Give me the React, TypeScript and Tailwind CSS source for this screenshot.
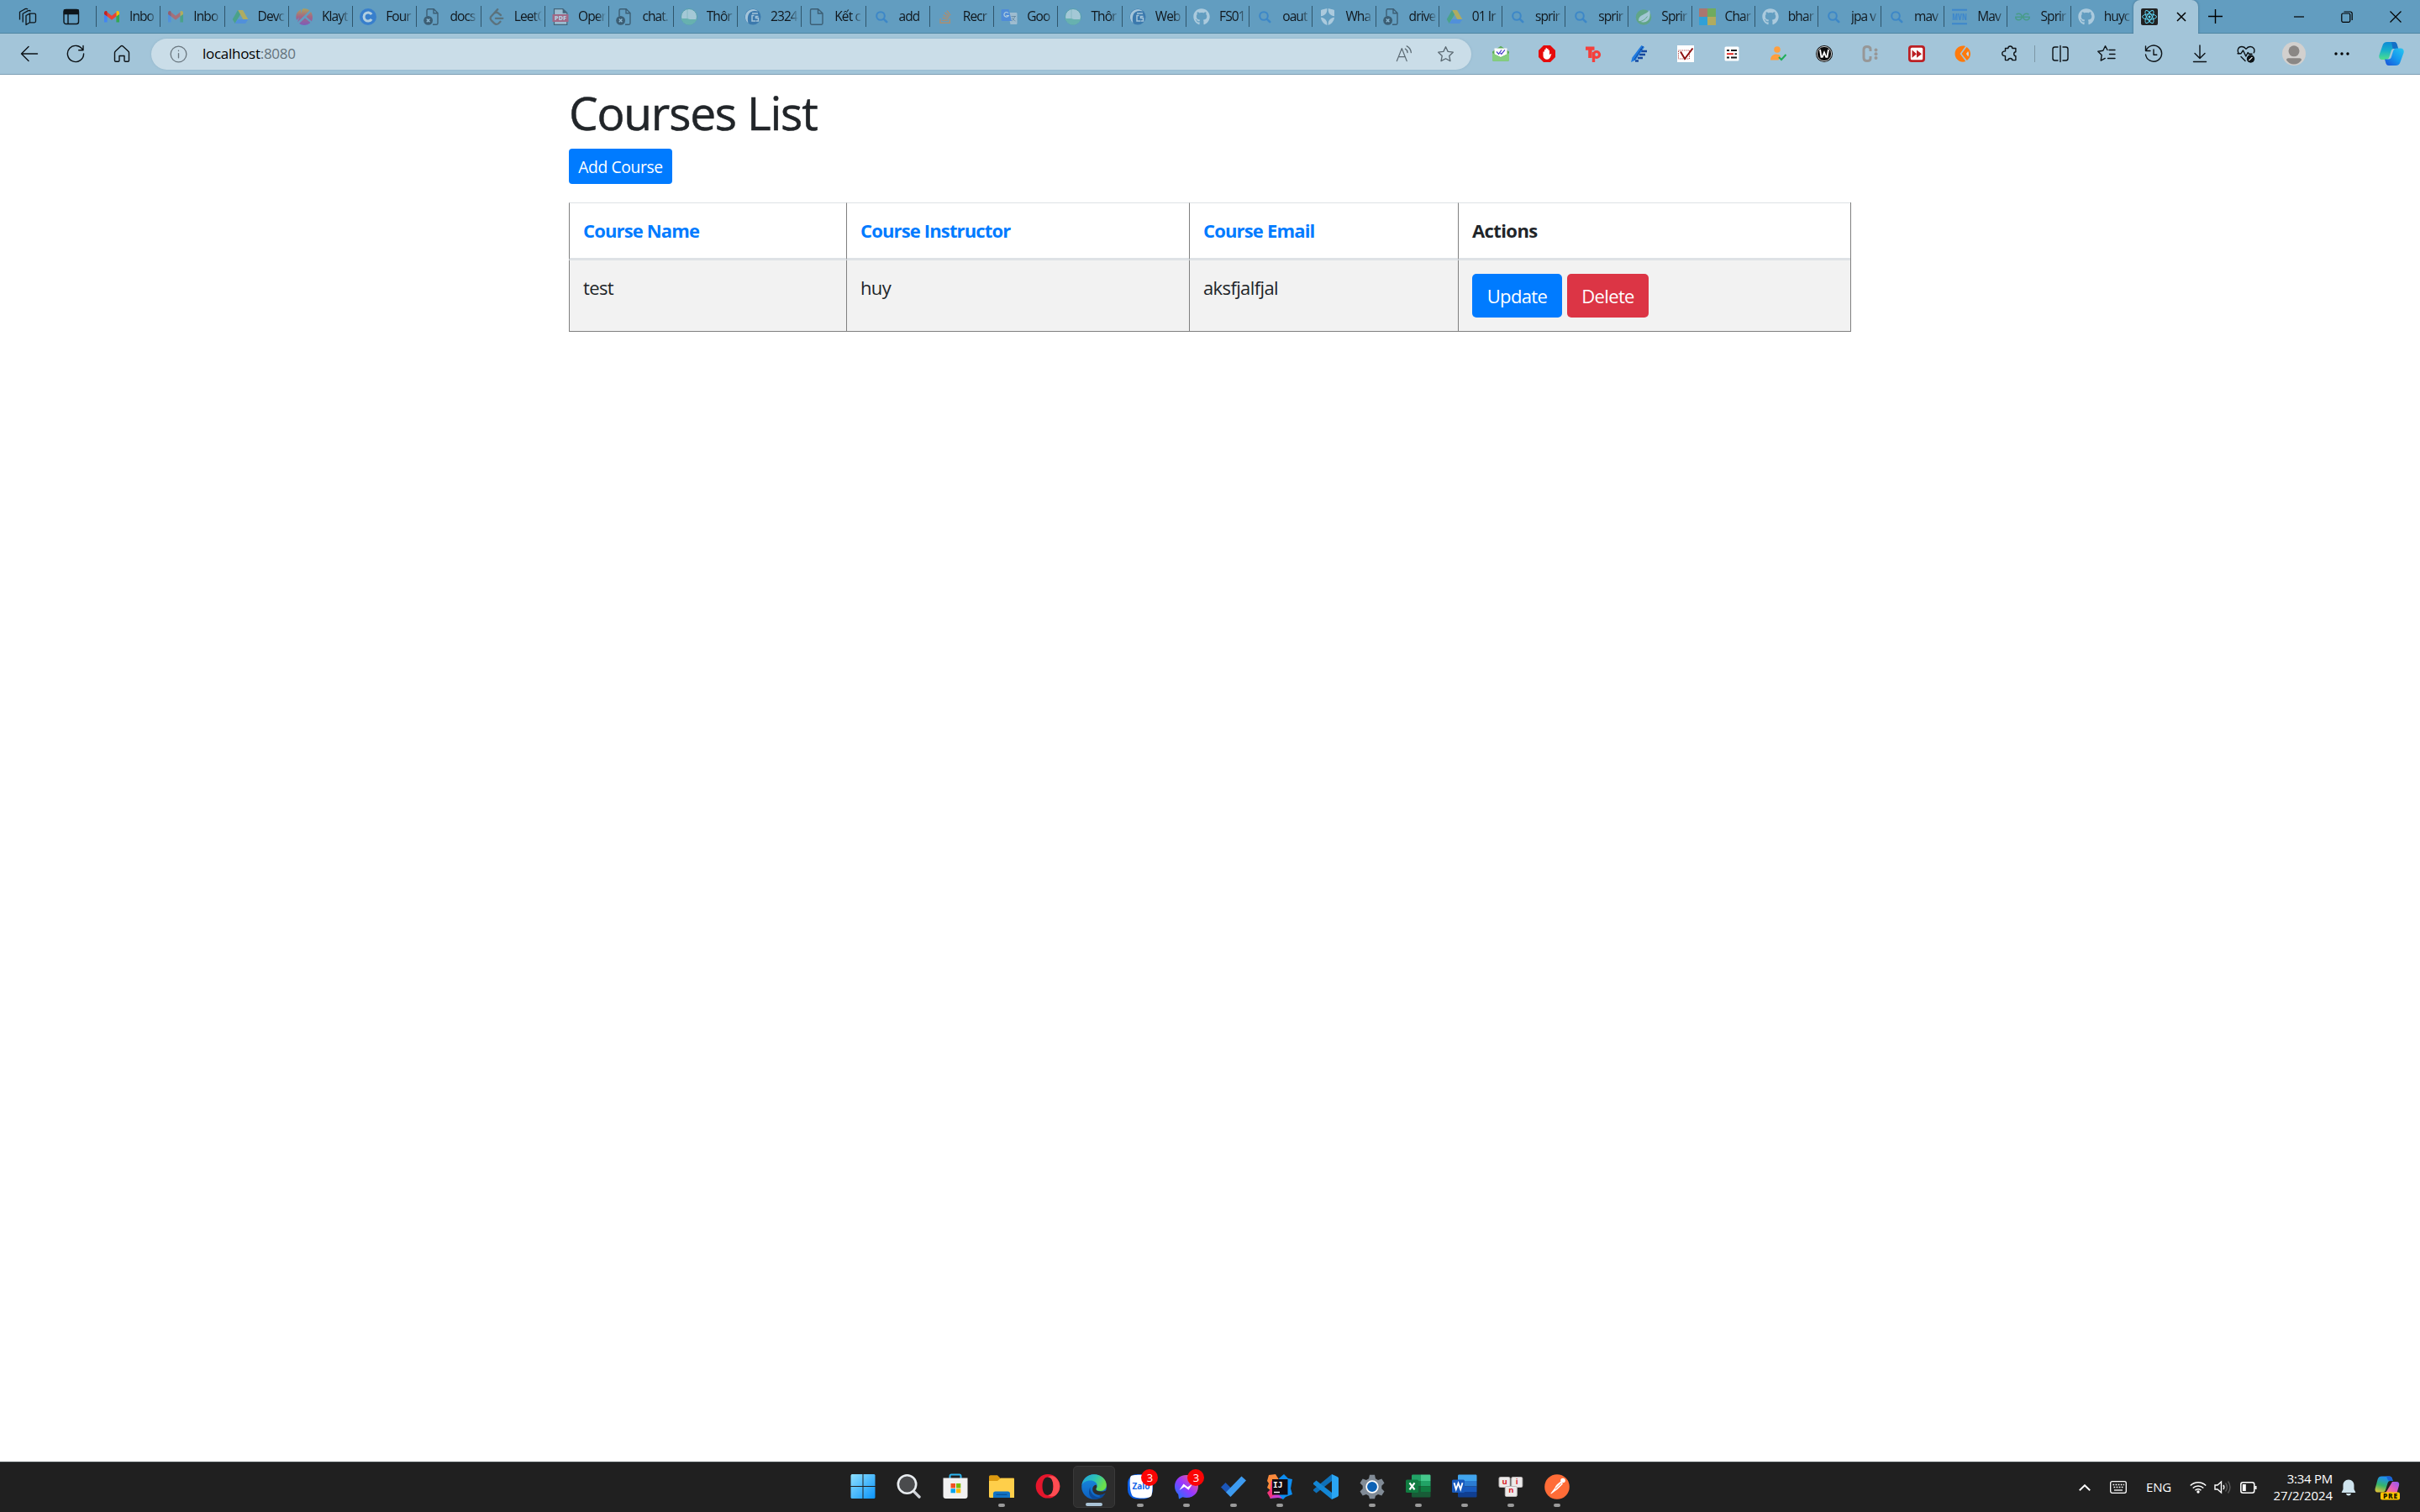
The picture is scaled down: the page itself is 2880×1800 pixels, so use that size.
import type { ReactNode } from "react";
import { FaGithub, FaStackOverflow } from "react-icons/fa";
import { SiGeeksforgeeks, SiLeetcode } from "react-icons/si";

/* ---------- tab favicons (20 x 20) ---------- */

const Gmail = () => (
  <svg viewBox="0 0 20 20" className="size-5">
    <path d="M1 5v11.5h3.6V8.6z" fill="#4285f4" />
    <path d="M15.400 8.600v7.900H19V5z" fill="#34a853" />
    <path d="M15.400 4.600v5l3.600-2.700V5.200c0-1.800-2-2.700-3.300-1.700z" fill="#fbbc04" />
    <path d="M4.600 9.600v-5L10 8.700l5.400-4.100v5L10 13.700z" fill="#ea4335" />
    <path d="M1 5.200v1.700l3.600 2.700v-5l-.3-1.100C3 2.500 1 3.400 1 5.200z" fill="#c5221f" />
  </svg>
);

const Drive = () => (
  <svg viewBox="0 0 20 20" className="size-5">
    <path d="M7 2h6l6.300 11h-6z" fill="#fbbc04" />
    <path d="M7 2 .7 13l3 5L10 7.300z" fill="#34a853" />
    <path d="M3.700 18h12.600l3-5H6.700z" fill="#4285f4" />
  </svg>
);

const Klay = () => (
  <svg viewBox="0 0 20 20" className="size-5">
    <defs>
      <linearGradient id="klay" x1="0" y1="0" x2="0" y2="1">
        <stop offset="0" stopColor="#f2a900" />
        <stop offset=".5" stopColor="#e5304c" />
        <stop offset="1" stopColor="#9b1fb0" />
      </linearGradient>
    </defs>
    <path d="M2 4.500 6 1v8L1 14C-.2 10 .3 7 2 4.500zM8 .5c3-.8 6-.1 8.500 2L2 16.500zM18 4l-5.500 6 6.500 5.500c1.500-4 1.200-8-1-11.500zM11 11.500 4 18c4 2.800 9.500 2.500 13.500-1z" fill="url(#klay)" />
  </svg>
);

const Coin = () => (
  <svg viewBox="0 0 20 20" className="size-5">
    <circle cx="10" cy="10" r="10" fill="#0f63d9" />
    <path d="M14.200 7.200a5 5 0 1 0 0 5.600" fill="none" stroke="#fff" strokeWidth="3" />
  </svg>
);

const PageX = () => (
  <svg viewBox="0 0 20 20" className="size-5" fill="none" stroke="#17212a" strokeWidth="1.400">
    <path d="M4 9.500V2.500C4 1.500 4.600.8 5.500.8h6.700L17 5.600v12c0 1-.6 1.600-1.500 1.600H11M12 1v4.800h5" />
    <circle cx="5.600" cy="14.400" r="5.400" fill="#17212a" stroke="none" />
    <path d="m3.800 12.600 3.600 3.600m0-3.600-3.600 3.600" stroke="#b5d4e6" />
  </svg>
);

const Page = () => (
  <svg viewBox="0 0 20 20" className="size-5" fill="none" stroke="#17212a" strokeWidth="1.400">
    <path d="M2.500 2.500C2.500 1.500 3 .8 4 .8h7.500l5.500 5v11.700c0 1-.6 1.700-1.500 1.700H4c-1 0-1.500-.7-1.500-1.700zM11.500 1v5H17" />
  </svg>
);

const Pdf = () => (
  <svg viewBox="0 0 20 20" className="size-5">
    <path d="M2.500.7h10.300l5 4.600v14H2.500z" fill="#d4dde3" stroke="#222d36" strokeWidth="1.200" />
    <path d="M12.600.7v5h5" fill="#222d36" />
    <rect x=".5" y="7" width="19" height="9" fill="#e0354c" />
    <text x="10" y="14.300" textAnchor="middle" fontFamily="Open Sans, sans-serif" fontSize="7.500" fontWeight="800" fill="#fff">PDF</text>
  </svg>
);

const Campus = () => (
  <svg viewBox="0 0 20 20" className="size-5">
    <circle cx="10" cy="10" r="9.500" fill="#e6f4ec" stroke="#46a094" />
    <path d="M1 12h7l3 1h8c-1.500 4.200-5 6.500-9 6.500S2 16.700 1 12z" fill="#6cc5a0" />
    <path d="M8 1v12" stroke="#85c2b4" strokeWidth=".6" />
  </svg>
);

const Globe = () => (
  <svg viewBox="0 0 20 20" className="size-5">
    <circle cx="10" cy="10" r="9.500" fill="#15569c" />
    <path d="M4.500 17.500C-1 13 0 5 6 2c4-2 8-1 10 1.500C11 2 6 3.500 4.500 8c-1 3-.8 6.500 0 9.500z" fill="#e6eef5" />
    <path d="M9 6h7M11.500 8.500H9V15h4m3.500-5.500h-3v2h3V15h-3" stroke="#e6eef5" strokeWidth="1.500" fill="none" />
  </svg>
);

const Lens = () => (
  <svg viewBox="0 0 20 20" className="size-5" fill="none" stroke="#1a73cf" strokeWidth="2.100">
    <circle cx="9" cy="9" r="4.800" />
    <path d="m12.600 12.600 3.600 3.400" strokeWidth="2.600" strokeLinecap="round" />
  </svg>
);

const Translate = () => (
  <svg viewBox="0 0 20 20" className="size-5">
    <path d="M8.500 5H18c1 0 1.500.6 1.500 1.500v11c0 1-.6 1.500-1.500 1.500h-6.500z" fill="#dadce0" />
    <path d="M2 1h7.500L13 15H2C1 15 .5 14.400.5 13.500v-11C.5 1.500 1 1 2 1z" fill="#3f7df0" />
    <path d="M9 5.600a2.800 2.800 0 1 0 .3 2.900H6.500" fill="none" stroke="#fff" strokeWidth="1.200" />
    <path d="M12.500 9.500H18m-1.300 0c-.6 2.500-2 4.200-3.500 5.500m.3-4c1 2 2.500 3.500 4 4" stroke="#6b7680" fill="none" strokeWidth=".9" />
  </svg>
);

const Microsoft = () => (
  <div className="grid size-5 grid-cols-2">
    <i className="bg-[#f25022]" />
    <i className="bg-[#7fba00]" />
    <i className="bg-[#00a4ef]" />
    <i className="bg-[#ffb900]" />
  </div>
);

const SpringLeaf = () => (
  <svg viewBox="0 0 20 20" className="size-5">
    <circle cx="10" cy="10.500" r="9.300" fill="#5fae50" />
    <path d="M17 2c1.500 6 1 14-7 14.500-2.500.2-4.500-.8-6-2C4 7 13 8 17 2z" fill="#e3f1e8" />
    <path d="M4 16c4-.5 8-2.500 10.500-6.500" stroke="#5fae50" fill="none" />
  </svg>
);

const Shield = () => (
  <svg viewBox="0 0 20 20" className="size-5" fill="#f4f8fa">
    <path d="M9.300 0v2.200C9 6 6.300 8.700 2 9.200V2.800c0-.8.400-1.300 1.200-1.400C5.500 1.100 7.500.6 9.300 0zM10.700 0v2.200c.3 3.800 3 6.500 7.300 7V2.800c0-.8-.4-1.300-1.200-1.400-2.300-.3-4.300-.8-6.100-1.400zM2 10.700c4.300.5 7 3 7.300 7V20C5 18.200 2.300 15 2 10.700zM18 10.700c-4.300.5-7 3-7.300 7V20c4.300-1.800 7-5 7.300-9.300z" />
  </svg>
);

const Mvn = () => (
  <svg viewBox="0 0 20 20" className="size-5">
    <path d="M1 1.800h18M1 18.200h18" stroke="#1a73d9" strokeWidth="2" />
    <text x="10" y="14" textAnchor="middle" textLength="17.500" lengthAdjust="spacingAndGlyphs" fontFamily="Open Sans, sans-serif" fontSize="11" fontWeight="800" fill="#1a73d9">MVN</text>
  </svg>
);

const ReactMark = () => (
  <svg viewBox="0 0 20 20" className="size-5">
    <rect width="20" height="20" rx="2" fill="#222" />
    <g fill="none" stroke="#61dafb" strokeWidth=".95">
      <ellipse cx="10" cy="10" rx="8.500" ry="3.200" />
      <ellipse cx="10" cy="10" rx="8.500" ry="3.200" transform="rotate(60 10 10)" />
      <ellipse cx="10" cy="10" rx="8.500" ry="3.200" transform="rotate(120 10 10)" />
    </g>
    <circle cx="10" cy="10" r="1.500" fill="#61dafb" />
  </svg>
);

const Leet = () => <SiLeetcode className="size-5 text-[#55483a]" />;
const Geeks = () => <SiGeeksforgeeks className="size-[18px] text-[#2f9b56]" />;
const GitHub = () => <FaGithub className="size-5 text-[#f4f8fa]" />;
const Stack = () => <FaStackOverflow className="size-[18px] text-[#f48024]" />;

const leftTabs: [() => ReactNode, string][] = [
  [Gmail, "Inbo"], [Gmail, "Inbo"], [Drive, "Devc"], [Klay, "Klayt"], [Coin, "Four"],
  [PageX, "docs"], [Leet, "LeetC"], [Pdf, "Oper"], [PageX, "chat."],
  [Campus, "Thôr"], [Globe, "2324"], [Page, "Kết c"], [Lens, "add"], [Stack, "Recr"],
  [Translate, "Goo"], [Campus, "Thôr"], [Globe, "Web"],
];

const rightTabs: [() => ReactNode, string][] = [
  [GitHub, "FS01"], [Lens, "oaut"], [Shield, "Wha"], [PageX, "drive"], [Drive, "01 Ir"],
  [Lens, "sprir"], [Lens, "sprir"], [SpringLeaf, "Sprir"], [Microsoft, "Char"], [GitHub, "bhar"],
  [Lens, "jpa v"], [Lens, "mav"], [Mvn, "Mav"], [Geeks, "Sprir"], [GitHub, "huyc"],
];

const Tab = ({ icon, label, width, strong }: { icon: ReactNode; label: string; width: string; strong?: boolean }) => (
  <div className={`flex h-[25px] shrink-0 items-center border-l border-[#2f556b] pl-2 ${width}`}>
    <span className={`flex size-5 shrink-0 items-center justify-center ${strong ? "" : "opacity-50"}`}>{icon}</span>
    <span className="ml-[11px] w-[33px] overflow-hidden text-[15.500px] leading-[25px] tracking-[-0.900px] whitespace-nowrap text-[#10171c] [mask-image:linear-gradient(to_right,black_68%,transparent)]">
      {label}
    </span>
  </div>
);

/* ---------- browser toolbar ---------- */

const Line = ({ children, className = "size-[22px]" }: { children: ReactNode; className?: string }) => (
  <svg viewBox="0 0 22 22" className={className} fill="none" stroke="currentColor" strokeWidth="1.400" strokeLinecap="round" strokeLinejoin="round">
    {children}
  </svg>
);

const Slot = ({ children, className = "w-[55px]" }: { children: ReactNode; className?: string }) => (
  <div className={`flex shrink-0 items-center justify-center ${className}`}>{children}</div>
);

const Star = () => <path d="m11 1.800 2.800 5.900 6.400.9-4.700 4.500 1.200 6.500-5.700-3.100-5.700 3.100 1.200-6.500L1.800 8.600l6.400-.9z" />;

const extensions: ReactNode[] = [
  <svg viewBox="0 0 20 20" className="size-5">
    <path d="M0 7.500 10 .8l10 6.700V17c0 1-.7 1.800-1.800 1.800H1.800C.7 18.800 0 18 0 17z" fill="#5cab57" />
    <path d="M2.500 3.500h15v7L10 14l-7.500-3.500z" fill="#fff" />
    <path d="m0 9 10 5.500L20 9v8c0 1-.7 1.800-1.800 1.800H1.800C.7 18.800 0 18 0 17z" fill="#86cf80" />
    <path d="m5 7.500 2.500 2.800L11 5.500M9.500 9l1.300 1.300 4.200-5" stroke="#4338ca" fill="none" strokeWidth="1.200" />
  </svg>,
  <svg viewBox="0 0 20 20" className="size-5">
    <path d="M6 0h8l6 6v8l-6 6H6l-6-6V6z" fill="#e60b0b" />
    <path d="M5.500 7.500v5c0 2.500 2 4.300 4.500 4.300 2.300 0 3.500-1.500 4.200-3.300l1.200-3.500-1.800.5-.6.900V5.800h-1.500V4h-1.500v-.8H8.500V5H7v2.500z" fill="#fff" />
  </svg>,
  <svg viewBox="0 0 20 20" className="size-5 overflow-visible">
    <path d="M1 1.500h10.500v4.300H8.600V15H4.200V5.800H1z" fill="#f4403c" />
    <path d="M10.500 20V8" stroke="#f4403c" strokeWidth="3.400" />
    <circle cx="14" cy="11" r="3.500" fill="none" stroke="#f4403c" strokeWidth="3.200" />
  </svg>,
  <svg viewBox="0 0 20 20" className="size-5">
    <path d="M12 7h7M10 11h7M8 15h6M5 18.500h4" stroke="#15489f" strokeWidth="2.500" />
    <path d="M12.500 0 16 2 5.500 17.500 0 20l1.500-5.500z" fill="#1f7ae0" />
    <path d="m11 4.500 2.500 1.500M14.500 1 4 17" stroke="#124a9c" />
  </svg>,
  <svg viewBox="0 0 20 20" className="size-5">
    <rect width="20" height="20" fill="#fff" />
    <rect x="1.500" y="6" width="13" height="10" fill="none" stroke="#b34747" strokeDasharray="1.200 1" />
    <path d="m4 7.500 5 8.500L18.500 3.500" fill="none" stroke="#8e1010" strokeWidth="2" />
  </svg>,
  <svg viewBox="0 0 20 20" className="size-5">
    <rect x="1.500" y="1.500" width="17" height="17" rx="1.500" fill="#fff" />
    <path d="M4 6h3m2 0h7M4 14.500h3m2 0h7" stroke="#1d1d1d" strokeWidth="1.800" />
    <path d="M4 10.200h8" stroke="#e5261f" strokeWidth="2" />
    <path d="M13.500 10.200H16" stroke="#1d1d1d" strokeWidth="1.800" />
  </svg>,
  <svg viewBox="0 0 20 20" className="size-5">
    <circle cx="9" cy="5" r="3.800" fill="#ff9f3f" />
    <path d="M1 17.500c0-4.500 3-7 7-7 2 0 3.800.7 5 2l-2.500 5z" fill="#ff9f3f" />
    <path d="m11 14 3 3 5.500-6" fill="none" stroke="#1fae57" strokeWidth="2" />
  </svg>,
  <svg viewBox="0 0 20 20" className="size-5">
    <circle cx="10" cy="10" r="10" fill="#0a0a0a" />
    <circle cx="10" cy="10" r="8.600" fill="none" stroke="#fff" strokeWidth=".8" />
    <path d="m5 5 1.500 8.800h1.300L10 8.500l2.200 5.300h1.300L15 5" fill="none" stroke="#fff" strokeWidth="1.900" />
  </svg>,
  <svg viewBox="0 0 20 20" className="size-5">
    <path d="M10 7V4.500C10 2.500 8.500 1.500 6 1.500s-4 1-4 3.500v10c0 2.500 1.500 3.500 4 3.500s4-1 4-3V13" fill="none" stroke="#979797" strokeWidth="3" />
    <g fill="#979797"><circle cx="16.500" cy="5.500" r="2" /><circle cx="16.500" cy="10.300" r="2" /><circle cx="16.500" cy="15.100" r="2" /></g>
  </svg>,
  <svg viewBox="0 0 20 20" className="size-5">
    <rect width="20" height="20" rx="4" fill="#bb2024" />
    <rect x="2.800" y="2.800" width="14.400" height="14.400" rx="1.500" fill="#fff" />
    <path d="m4.500 5.500 5.500 4.700-5.500 4.500zm5.500 0 6 4.700-6 4.500z" fill="#bb2024" />
  </svg>,
  <svg viewBox="0 0 20 20" className="size-5">
    <path d="M13 1 6.500 10l6.800 9C7 21.500.5 16.500.5 10S7-1 13 1z" fill="#ff7a0c" />
    <path d="m14.500 2-6 8 6.300 8C20 14.500 21 6.500 14.500 2z" fill="#ff7a0c" />
    <path d="m16.200 7-2.300 3 2.300 3.500c1-2 1-4.500 0-6.500z" fill="#c4dae6" />
  </svg>,
  <Line>
    <path d="M5.500 4.500h3.300c.2-3.300 4.900-3.300 5.100 0h4v4.200c-2.900.2-2.900 4.700 0 4.900v5h-4c-.2-2.900-4.900-2.900-5.100 0H5.500v-4.800c-5-.2-5-5.700 0-5.900z" transform="translate(1 0)" />
  </Line>,
];

const CopilotMark = () => (
  <svg viewBox="0 0 30 28" className="h-[28px] w-[30px]">
    <defs>
      <linearGradient id="cpa" x1="0" y1="0" x2="0" y2="1">
        <stop offset="0" stopColor="#0e8ad6" /><stop offset=".5" stopColor="#19b2c9" /><stop offset="1" stopColor="#4fe08a" />
      </linearGradient>
      <linearGradient id="cpb" x1="0" y1="1" x2="1" y2="0">
        <stop offset="0" stopColor="#1b4fd6" /><stop offset=".5" stopColor="#1597ee" /><stop offset="1" stopColor="#27c7f0" />
      </linearGradient>
    </defs>
    <path d="M10 0h8c2.500 0 3.300 1.500 4 4l1 4h-5c-2 0-3 1-3.500 3l-2 6.500c-.7 2.300-1.700 3.500-4 3.500H4c-3 0-4.300-2.300-3.500-5.500L4.500 4C5.300 1.200 7 0 10 0z" fill="url(#cpa)" />
    <path d="M15 0h3c2.500 0 3.300 1.500 4 4l1 4h-5c-2 0-1.500-1-2-3z" fill="#146fc6" />
    <path d="M20 28h-8c-2.500 0-3.300-1.500-4-4l-1-3.500h4.500c2 0 3-1 3.500-3l2-6.500c.7-2.300 1.700-3.500 4-3.500h5c3 0 4.300 2.300 3.500 5.500L25.500 24c-.8 2.800-2.500 4-5.500 4z" fill="url(#cpb)" />
  </svg>
);

const TitleBar = () => (
  <div className="flex h-10 items-center border-b border-[#4f85a3] bg-[#629dc0]">
    <div className="flex w-[114px] shrink-0 items-center pl-[22px]">
      <svg viewBox="0 0 22 22" className="size-[22px]" fill="none" stroke="#0d151a" strokeWidth="1.300" strokeLinejoin="round">
        <path d="m9 9.500 4.500-2.300v10.600L9 20.500zM13.500 7.200H19c.9 0 1.500.5 1.500 1.400v7.700c0 1-.6 1.500-1.500 1.500h-5.500" />
        <path d="M5.200 17.500V7.300l6-3.400c1.300-.6 2.500-.5 3.300.5M1.500 14.500V5.300l6.200-3.600c1.300-.6 2.500-.5 3.300.5" />
      </svg>
      <svg viewBox="0 0 20 20" className="ml-[31px] size-[20px]" fill="none" stroke="#0d151a" strokeWidth="1.400">
        <rect x="1" y="1.500" width="17.500" height="17" rx="2.500" />
        <path d="M1.500 2h16.500v4.500H1.500z" fill="#0d151a" />
        <path d="M6 6.500V18" />
      </svg>
    </div>
    {leftTabs.map(([Icon, label], i) => (
      <Tab key={i} icon={<Icon />} label={label} width="w-[76.300px]" strong={i === 0} />
    ))}
    {rightTabs.map(([Icon, label], i) => (
      <Tab key={i} icon={<Icon />} label={label} width="w-[75.200px]" />
    ))}
    <div className="relative -mb-px flex h-10 w-[77px] shrink-0 items-center rounded-t-lg bg-[#a3c5d9] pl-[9px] shadow-[0_0_3px_#3d6b86] [clip-path:inset(0_-4px_0_-4px)]">
      <ReactMark />
      <svg viewBox="0 0 12 12" className="ml-[22px] size-3" stroke="#000" strokeWidth="1.500"><path d="m1 1 10 10M11 1 1 11" /></svg>
    </div>
    <svg viewBox="0 0 17 17" className="ml-[12px] size-[17px]" stroke="#000" strokeWidth="1.400"><path d="M8.500 0v17M0 8.500h17" /></svg>
    <div className="ml-auto flex items-center">
      <Slot className="w-[57px]"><svg viewBox="0 0 12 12" className="size-3" stroke="#000" strokeWidth="1.200"><path d="M0 6h12" /></svg></Slot>
      <Slot className="w-[58px]">
        <svg viewBox="0 0 14 14" className="size-[14px]" fill="none" stroke="#000" strokeWidth="1.200">
          <rect x=".8" y="3" width="10" height="10.300" rx="1.500" />
          <path d="M3.500 1h7.500c1.300 0 2.200.9 2.200 2.200V11" />
        </svg>
      </Slot>
      <Slot className="w-[58px]"><svg viewBox="0 0 14 14" className="size-[14px]" stroke="#000" strokeWidth="1.200"><path d="m.5.5 13 13m0-13-13 13" /></svg></Slot>
    </div>
  </div>
);

const ToolBar = () => (
  <div className="flex h-[49px] items-center border-b border-[#7c9fb4] bg-[#a3c5d9] pl-[7.500px] text-[#0c1216]">
    <Slot><Line><path d="M20.500 11H1.800M10 2.500 1.500 11l8.500 8.500" /></Line></Slot>
    <Slot><Line><path d="M19.500 6.500A9.600 9.600 0 1 0 20.600 11M20 1.500v5.300h-5.300" /></Line></Slot>
    <Slot><Line><path d="M2.500 9.800c0-.7.300-1.300.8-1.700l6.500-6a1.800 1.800 0 0 1 2.400 0l6.500 6c.5.400.8 1 .8 1.700V19c0 .8-.5 1.300-1.300 1.300h-2.900c-.8 0-1.300-.5-1.300-1.300v-5.500h-6V19c0 .8-.5 1.300-1.300 1.300H3.800c-.8 0-1.300-.5-1.300-1.300z" /></Line></Slot>
    <div className="ml-[7.500px] flex h-[37px] w-[1571px] items-center rounded-full bg-[#cadde8] pl-[22px] text-[#6b7880] shadow-[0_0_3px_#92b4c8]">
      <Line className="size-[21px]"><circle cx="11" cy="11" r="9.800" /><path d="M11 10v5.500M11 6.500v.4" /></Line>
      <span className="ml-[18px] text-[17px] tracking-[-0.280px] text-[#64737c]"><span className="text-black">localhost</span>:8080</span>
      <div className="ml-auto flex pr-[6px] text-[#5c6a73]">
        <Slot className="w-[50px]">
          <Line className="size-[20px]"><path d="M1.500 20.500 8 4l6.500 16.500M3.800 15h8.500M12.500 4.500c1.800 1 2.800 2.800 3 5M14.500 1c3.300 1.700 5.300 4.700 5.700 8.500" /></Line>
        </Slot>
        <Slot className="w-[49px]"><Line className="size-[21px]"><Star /></Line></Slot>
      </div>
    </div>
    <div className="ml-[7.500px] flex items-center">
      {extensions.map((e, i) => (<Slot key={i}>{e}</Slot>))}
      <div className="mr-[2px] ml-[2px] h-5 w-[1.500px] bg-[#7d97a6]" />
      <Slot>
        <Line><path d="M8 3H4.500A2.500 2.500 0 0 0 2 5.500v11A2.500 2.500 0 0 0 4.500 19H8M14 3h3.500A2.500 2.500 0 0 1 20 5.500v11a2.500 2.500 0 0 1-2.500 2.500H14M11 1.500v19" /></Line>
      </Slot>
      <Slot className="w-[56px]"><Line><path d="M12 6.500 9.500 1.800 6.800 7.300l-6 .9 4.400 4.300-1 6.600 5-2.700M14 6.500h7M14.500 11.500H21M12.500 16.500H21" /></Line></Slot>
      <Slot><Line><path d="M2 7.300A9.600 9.600 0 1 1 1.500 12M1.500 2v5.500H7M11 6v6.300h3.800" /></Line></Slot>
      <Slot><Line><path d="M11 1v15M5 10.500l6 6 6-6M3.500 20.500h15" /></Line></Slot>
      <Slot>
        <Line><path d="M2.500 11C-.2 7 1.700 2.500 6 2.500c2.200 0 3.700 1 5 2.800 1.300-1.800 2.800-2.800 5-2.800 3.800 0 6 3.500 4.300 7.300M5 14.500l5 5M1 10.700h4L7.500 7l3.300 7 2.400-4.500 1.300 1.700H18" /><circle cx="16.500" cy="17" r="4.700" fill="currentColor" stroke="none" /><path d="m14.800 18.600 3.300-3.200" stroke="#fff" strokeWidth="1.200" /></Line>
      </Slot>
      <Slot className="w-[59px]">
        <svg viewBox="0 0 28 28" className="size-7">
          <circle cx="14" cy="14" r="14" fill="#d2d0ce" />
          <circle cx="14" cy="10.800" r="6.500" fill="#8a8785" />
          <path d="M5 21.500c0-1.500 1-2.300 2.300-2.300h13.400c1.300 0 2.300.8 2.300 2.300-2 3-5.200 5-9 5s-7-2-9-5z" fill="#8a8785" />
        </svg>
      </Slot>
      <Slot className="w-[56px]"><svg viewBox="0 0 18 4" className="h-1 w-[18px]"><circle cx="2" cy="2" r="1.700" /><circle cx="9" cy="2" r="1.700" /><circle cx="16" cy="2" r="1.700" /></svg></Slot>
      <Slot className="w-[61px]"><CopilotMark /></Slot>
    </div>
  </div>
);

/* ---------- page ---------- */

const CoursesPage = () => (
  <main className="flex-1 bg-white pt-[12px] pl-[677px] text-[22px] leading-[33px] text-[#212529]">
    <h1 className="h-[66px] text-[55px] leading-[66px] font-medium tracking-[-1.200px] [-webkit-text-stroke:0.500px]">Courses List</h1>
    <a className="mt-[10px] flex h-[42px] w-[123px] items-center justify-center rounded-[4px] bg-[#007bff] text-[19.250px] tracking-[-0.350px] text-white">Add Course</a>
    <table className="mt-[22px] w-[1526px] table-fixed border-separate border-spacing-0 border-r border-b border-[#808080]">
      <thead>
        <tr className="h-[69px] text-left align-middle text-[#007bff]">
          <th className="w-[330px] border-t border-b-[3px] border-l border-t-[#dee2e6] border-b-[#dee2e6] border-l-[#808080] pl-4 tracking-[-0.850px]">Course Name</th>
          <th className="w-[408px] border-t border-b-[3px] border-l border-t-[#dee2e6] border-b-[#dee2e6] border-l-[#808080] pl-4 tracking-[-0.850px]">Course Instructor</th>
          <th className="w-[320px] border-t border-b-[3px] border-l border-t-[#dee2e6] border-b-[#dee2e6] border-l-[#808080] pl-4 tracking-[-0.830px]">Course Email</th>
          <th className="border-t border-b-[3px] border-l border-t-[#dee2e6] border-b-[#dee2e6] border-l-[#808080] pl-4 tracking-[-0.600px] text-[#212529]">Actions</th>
        </tr>
      </thead>
      <tbody>
        <tr className="h-[84px] bg-[#f2f2f2] align-top tracking-[-0.620px]">
          <td className="border-l border-[#808080] pt-4 pl-4">test</td>
          <td className="border-l border-[#808080] pt-4 pl-4">huy</td>
          <td className="border-l border-[#808080] pt-4 pl-4">aksfjalfjal</td>
          <td className="border-l border-[#808080] pt-4 pl-4">
            <div className="flex gap-[6px] text-white">
              <a className="flex h-[52px] w-[107px] items-center justify-center rounded-[5px] bg-[#007bff]">Update</a>
              <a className="flex h-[52px] w-[97px] items-center justify-center rounded-[5px] bg-[#dc3545]">Delete</a>
            </div>
          </td>
        </tr>
      </tbody>
    </table>
  </main>
);

/* ---------- taskbar ---------- */

const App30 = ({ children }: { children: ReactNode }) => <svg viewBox="0 0 30 30" className="size-[30px] overflow-visible">{children}</svg>;

const Badge = () => (
  <span className="absolute -top-[6px] left-[16px] flex size-5 items-center justify-center rounded-full bg-[#fb0505] text-[13px] leading-none text-white">3</span>
);

const apps: { icon: ReactNode; state?: "open" | "active" }[] = [
  { icon: <App30><defs><linearGradient id="win" x1="0" y1="0" x2="1" y2="1"><stop offset="0" stopColor="#8fe1ff" /><stop offset="1" stopColor="#0a93fa" /></linearGradient></defs><path d="M1.500 0h13v14h-14V1.500zM15.500 0h13l1 1v13h-14zM.5 15h14v14H1.500l-1-1zM15.500 15h14v13l-1 1h-13z" fill="url(#win)" /></App30> },
  { icon: <App30><path d="m20.500 20.500 6.500 6.500" stroke="#cfd3d8" strokeWidth="3.300" strokeLinecap="round" /><circle cx="12.500" cy="12" r="10.700" fill="#4a4b4d" stroke="#e9edf0" strokeWidth="2.600" /></App30> },
  { icon: <App30><path d="M8.500 5V2c0-.8.500-1.500 1.300-1.500h10.400c.8 0 1.300.7 1.300 1.500v3" fill="none" stroke="#2cb5f0" strokeWidth="2" /><path d="M.5 4.500h29V26c0 2-1 3-3 3h-23c-2 0-3-1-3-3z" fill="#f1f1f1" /><path d="M9.500 11H15v5.500H9.500z" fill="#f25022" /><path d="M16 11h5.300v5.500H16z" fill="#7fba00" /><path d="M9.500 17.300H15v5H9.500z" fill="#00a4ef" /><path d="M16 17.300h5.300v5H16z" fill="#ffb900" /></App30> },
  { icon: <App30><path d="M0 3c0-1 .8-1.700 1.800-1.700H10l3.500 3.500H30V15H0z" fill="#dc9a10" /><path d="M0 8h10l4-3.200h14.500c1 0 1.500.6 1.500 1.500V28H1.500C.6 28 0 27.300 0 26.500z" fill="#ffcf4a" /><path d="M5 28v-5c0-1.500 1-2.500 2.500-2.500h15c1.500 0 2.500 1 2.500 2.500v5z" fill="#1173c4" /><path d="M8.500 24.300h13" stroke="#0a4f92" strokeWidth="1.200" /></App30>, state: "open" },
  { icon: <App30><path fillRule="evenodd" d="M15 0a14.300 14.300 0 1 0 0 28.600A14.300 14.300 0 1 0 15 0zm0 3.600c-4.300 0-6.500 4.600-6.500 10.700S10.700 25 15 25s6.500-4.600 6.500-10.700S19.300 3.600 15 3.600z" fill="#e5162c" /><path d="M15 3.600C18 1.500 22 2 24.500 4c6.500 6 6.300 15.500 0 20.700-2.500 2-6.500 2.400-9.500.3 4.300 0 6.500-4.600 6.500-10.700S19.300 3.600 15 3.600z" fill="#ff4d52" /></App30> },
  { icon: <App30><defs><linearGradient id="edg" x1="0" y1="0" x2="1" y2=".4"><stop offset="0" stopColor="#1f9fe0" /><stop offset=".55" stopColor="#2dc3b5" /><stop offset="1" stopColor="#6be04a" /></linearGradient><linearGradient id="edb" x1="0" y1="0" x2="0" y2="1"><stop offset="0" stopColor="#1a8fe0" /><stop offset="1" stopColor="#0d5fc0" /></linearGradient></defs><circle cx="15" cy="15" r="14.800" fill="url(#edb)" /><path d="M.4 13C1.500 5.500 7.500.2 15 .2c8.500 0 14.800 6 14.800 12.600 0 4.300-3 7.200-7 7.200-3.500 0-5.500-1-5.500-2.300 0-1 1.400-1.500 1.400-4C18.700 10 15 7.500 10.500 7.500 5.500 7.500 1.500 10 .4 13z" fill="url(#edg)" /><path d="M10.500 15c-1 6 3.500 12.500 11 12.500 2 0 4-.5 6-2C24 29 20 30 15 29.800 10 28 7 23 10.500 15z" fill="#0c4a98" /><path d="M17.300 12.500c-2.600.8-4.100 2.800-4.100 5.500 0 4.300 4 6.800 8.500 6.800 3 0 5-.8 7-2.500.8-.8 1.300-2 1.500-3.500-2 1.500-4.500 2-7.200 1.700-3.500-.2-5.700-1.300-5.700-2.800 0-1 1.400-1.500.9-4z" fill="#2d2d2d" /><path d="M28.700 22.300c-2 1.700-4.500 2.500-7 2.500v2.700c3 0 5.300-1.500 7-5.200z" fill="#0c4a98" /></App30>, state: "active" },
  { icon: <div className="relative"><App30><rect width="30" height="29.500" rx="11" fill="#0b5fe8" /><path d="M4 2C7 .5 25 0 27.500 2.500S30 20 28.500 25s-18 4-22 1.500S1.500 5 4 2z" fill="#fff" /><text x="16" y="17.500" textAnchor="middle" fontFamily="Open Sans, sans-serif" fontSize="10" fontWeight="700" fill="#1465e8">Zalo</text></App30><Badge /></div>, state: "open" },
  { icon: <div className="relative"><App30><defs><linearGradient id="msg" x1="0" y1="1" x2="1" y2="0"><stop offset="0" stopColor="#0a7cff" /><stop offset=".5" stopColor="#9a36ff" /><stop offset="1" stopColor="#ff6a6a" /></linearGradient></defs><path d="M15 1C6.500 1 1 7 1 14.500c0 4 1.600 7 4.200 9.500L6 29.500l4.500-2.200c1.400.4 3 .7 4.500.7 8.500 0 14-6 14-13.500S23.500 1 15 1z" fill="url(#msg)" /><path d="m6.500 19 5-7.500 5 3.700 6-4-5 7.500-5-3.700z" fill="#fff" /></App30><Badge /></div>, state: "open" },
  { icon: <App30><path d="m0 15.500 5.500-5.500 10 10-4.500 6.500z" fill="#1b56b8" /><path d="m6 21.500 18.500-19 5.500 5L11.500 27z" fill="#3d9bf0" /></App30>, state: "open" },
  { icon: <App30><path d="M2 1 10 0l5 8-10 12L0 16l2-5-2-3z" fill="#fc8a3c" /><path d="m5 8 8-1v16l-9 6L0 22l4-4z" fill="#f2357b" /><path d="m14 5 6-5 5 5 5 1-2 11 2 7-8 3-3 3-8-5z" fill="#0c8cf0" /><path d="m3 29 9-7 6 7-5-1z" fill="#c83fd0" /><rect x="6" y="6" width="18.500" height="18.500" fill="#120b12" /><text x="7" y="15.500" fontFamily="DejaVu Sans Mono, monospace" fontSize="9.500" fontWeight="700" fill="#fff">IJ</text><path d="M8 21.500h7" stroke="#fff" strokeWidth="1.400" /></App30>, state: "open" },
  { icon: <App30><path d="M22 0v8L3.500 22.500 0 19.500v-1.300z" fill="#0e70b8" /><path d="m3.500 7.500-3.500 3V12l22 18v-8z" fill="#1386d4" /><path d="m22 0 6.500 3c1 .5 1.500 1.200 1.500 2.200v19.600c0 1-.5 1.700-1.500 2.200L22 30z" fill="#2aa5f2" /></App30> },
  { icon: <App30><path d="M12 .8h6l1 4.400 3 1.800 4.300-1.400 3.200 5-3.200 3.200v3.400l3.200 3.200-3.200 5-4.300-1.400-3 1.800-1 3.400h-6l-1-3.400L8 24l-4.300 1.400-3.200-5 3.200-3.200v-3.400L.5 10.600l3.200-5L8 7l3-1.800z" fill="#818b96" /><circle cx="15" cy="15" r="6.800" fill="#0d62b5" stroke="#fff" strokeWidth="1.700" /></App30>, state: "open" },
  { icon: <App30><path d="M7 2c0-1 .5-1.500 1.500-1.500H18V8H7z" fill="#21a366" /><path d="M18 .5h10c1 0 1.500.5 1.500 1.500v6H18z" fill="#45c88b" /><path d="M7 8h11v6.500H7z" fill="#148044" /><path d="M18 8h11.500v6.500H18z" fill="#21a366" /><path d="M7 14.500h22.500V26c0 1-.5 1.500-1.500 1.500H8.500C7.500 27.500 7 27 7 26z" fill="#185c37" /><path d="M18 14.500h11.500V21H18z" fill="#107c41" /><rect x="0" y="6.500" width="15" height="15.500" rx="1.500" fill="#107c41" /><path d="m4.500 10.300 6 8m0-8-6 8" stroke="#fff" strokeWidth="2.200" /></App30>, state: "open" },
  { icon: <App30><path d="M7 8V2c0-1 .5-1.500 1.500-1.500H28c1 0 1.500.5 1.500 1.500v6z" fill="#41a5ee" /><path d="M7 8h22.500v6.500H7z" fill="#2b7cd3" /><path d="M7 14.500h22.500V21H7z" fill="#185abd" /><path d="M7 21h22.500v5c0 1-.5 1.500-1.500 1.500H8.500C7.500 27.500 7 27 7 26z" fill="#103f91" /><rect x="0" y="6.500" width="15" height="15.500" rx="1.500" fill="#185abd" /><path d="m2.500 10.300 2.300 7.700 2.700-7.300 2.700 7.300 2.300-7.700" fill="none" stroke="#fff" strokeWidth="1.900" /></App30>, state: "open" },
  { icon: <App30><g fill="#eceaea" stroke="#bdb9b9"><rect x="1" y="3.500" width="13" height="12" rx="1.500" /><rect x="15.800" y="3.500" width="13" height="12" rx="1.500" /><rect x="8.300" y="14.500" width="14" height="12" rx="1.500" /></g><g fontFamily="Open Sans, sans-serif" fontSize="9.500" fontWeight="700" fill="#d8262c" textAnchor="middle"><text x="7.500" y="11.500">u</text><text x="22.300" y="11.500">i</text><text x="15.300" y="22">n</text></g></App30>, state: "open" },
  { icon: <App30><circle cx="15" cy="15" r="14.800" fill="#ff6c37" /><circle cx="22" cy="7.500" r="2.800" fill="#fff" /><path d="m19.500 8.500 2.500 3-6.500 6.500-7.500 5.500-.7-.5 5-6.500c1-3 3.500-5.500 7.200-8z" fill="#fff" /><path d="m13 17.500 7-6.500" stroke="#ff6c37" strokeWidth=".9" /></App30>, state: "open" },
];

const TaskBar = () => (
  <footer className="relative flex h-[60px] justify-center border-t border-[#434a4c] bg-[#202020] text-[15px] text-white">
    <div className="flex pt-[4px]">
      {apps.map(({ icon, state }, i) => (
        <div key={i} className="flex w-[55.060px] justify-center">
          <div className={`relative flex size-[50px] justify-center rounded-[5px] ${state === "active" ? "border border-[#3a3a3a] bg-[#2d2d2d] pt-[9px]" : "pt-[10px]"}`}>
            {icon}
            {state && <i className={`absolute bottom-[1px] h-1 rounded-full ${state === "active" ? "w-5 bg-[#a9c3d6]" : "w-2 bg-[#9a9a9a]"}`} />}
          </div>
        </div>
      ))}
    </div>
    <div className="absolute top-0 right-0 flex h-[59px] items-center">
      <svg viewBox="0 0 14 8" className="h-2 w-[14px]" fill="none" stroke="#fff" strokeWidth="1.900"><path d="M.8 7.200 7 1.200l6.200 6" /></svg>
      <svg viewBox="0 0 20 15" className="ml-[23px] h-[15px] w-5" fill="none" stroke="#fff" strokeWidth="1.300">
        <rect x=".7" y=".7" width="18.600" height="13.600" rx="2" />
        <path d="M3.500 4.500h13.500M4.500 7.500h12" strokeWidth="1.700" strokeDasharray="1.700 1.400" />
        <path d="M5 11h10" />
      </svg>
      <span className="ml-[23.500px] w-[30px] tracking-[-0.200px]">ENG</span>
      <svg viewBox="0 0 20 15" className="ml-[22px] h-[15px] w-5" fill="none" stroke="#fff" strokeWidth="1.500">
        <path d="M.8 5.500a13 13 0 0 1 18.400 0M3.700 8.500a9 9 0 0 1 12.600 0M6.500 11.300a5 5 0 0 1 7 0" />
        <circle cx="10" cy="13" r="1.700" fill="#fff" stroke="none" />
      </svg>
      <svg viewBox="0 0 21 17" className="ml-[9px] h-[17px] w-[21px]" fill="none" stroke="#fff" strokeWidth="1.400">
        <path d="M1 6h3l4.500-4v13L4 11H1z" />
        <path d="M11 6c1 1.500 1 3.500 0 5" />
        <path d="M13.500 3.500c2.300 3 2.300 7 0 10M16.500 1.500c3.300 4 3.300 10 0 14" stroke="#5a5a5a" />
      </svg>
      <svg viewBox="0 0 20 14" className="ml-[10px] h-[14px] w-5" fill="none" stroke="#fff" strokeWidth="1.500">
        <rect x=".8" y=".8" width="16" height="12.400" rx="2.500" /><path d="M2.800 3h4v8h-4z" fill="#fff" stroke="none" /><path d="M18.500 5v4" strokeWidth="2" />
      </svg>
      <div className="-mt-[2px] ml-[19px] w-[71px] text-right leading-[20px]">
        <div className="tracking-[-0.250px]">3:34 PM</div>
        <div className="tracking-[-0.050px]">27/2/2024</div>
      </div>
      <svg viewBox="0 0 18 20" className="ml-[10px] h-5 w-[18px]" fill="#cfe4ee"><path d="M9 .5C5 .5 2.500 3.500 2.500 7v5L.8 15.200c-.2.500 0 .9.500.9h15.400c.5 0 .7-.4.500-.9L15.500 12V7C15.500 3.500 13 .5 9 .5zM6 17h6c-.3 1.700-1.500 2.500-3 2.500S6.300 18.700 6 17z" /></svg>
      <svg viewBox="0 0 30 30" className="mr-[24px] ml-[22px] size-[30px]">
        <defs>
          <linearGradient id="pra" x1=".3" y1="0" x2="0" y2="1"><stop offset="0" stopColor="#1f8ff0" /><stop offset=".5" stopColor="#35b56a" /><stop offset="1" stopColor="#f5c531" /></linearGradient>
          <linearGradient id="prb" x1="1" y1="0" x2="0" y2="1"><stop offset="0" stopColor="#8a5cf5" /><stop offset=".5" stopColor="#e05ac0" /><stop offset="1" stopColor="#ff8b5c" /></linearGradient>
        </defs>
        <path d="M8.500 1.500h9c2 0 3 1 3.500 3l.7 2.500h-3c-2 0-2.700 1-3.300 3l-2 6.500c-.7 2.500-1.700 4-4 4H4c-3 0-4-2-3.200-5L3.500 5.500c.8-2.800 2-4 5-4z" fill="url(#pra)" />
        <path d="M14 1.500h3.500c2 0 3 1 3.500 3l.7 2.500h-3.200c-2 0-3-1-3.500-3z" fill="#1a62d6" />
        <path d="M21 8h5c2.800 0 3.700 2 3 4.500L26.500 21H13l1.500-2z" fill="url(#prb)" />
        <rect x="7" y="20.500" width="23" height="9" rx="2" fill="#ffc700" />
        <text x="18.500" y="28" textAnchor="middle" textLength="17" fontFamily="Open Sans, sans-serif" fontSize="8.300" fontWeight="800" fill="#201a00">PRE</text>
      </svg>
    </div>
  </footer>
);

export default function App() {
  return (
    <div className="flex h-[1800px] w-[2880px] flex-col overflow-hidden bg-white font-['Open_Sans','Noto_Sans',sans-serif]">
      <TitleBar />
      <ToolBar />
      <CoursesPage />
      <TaskBar />
    </div>
  );
}
